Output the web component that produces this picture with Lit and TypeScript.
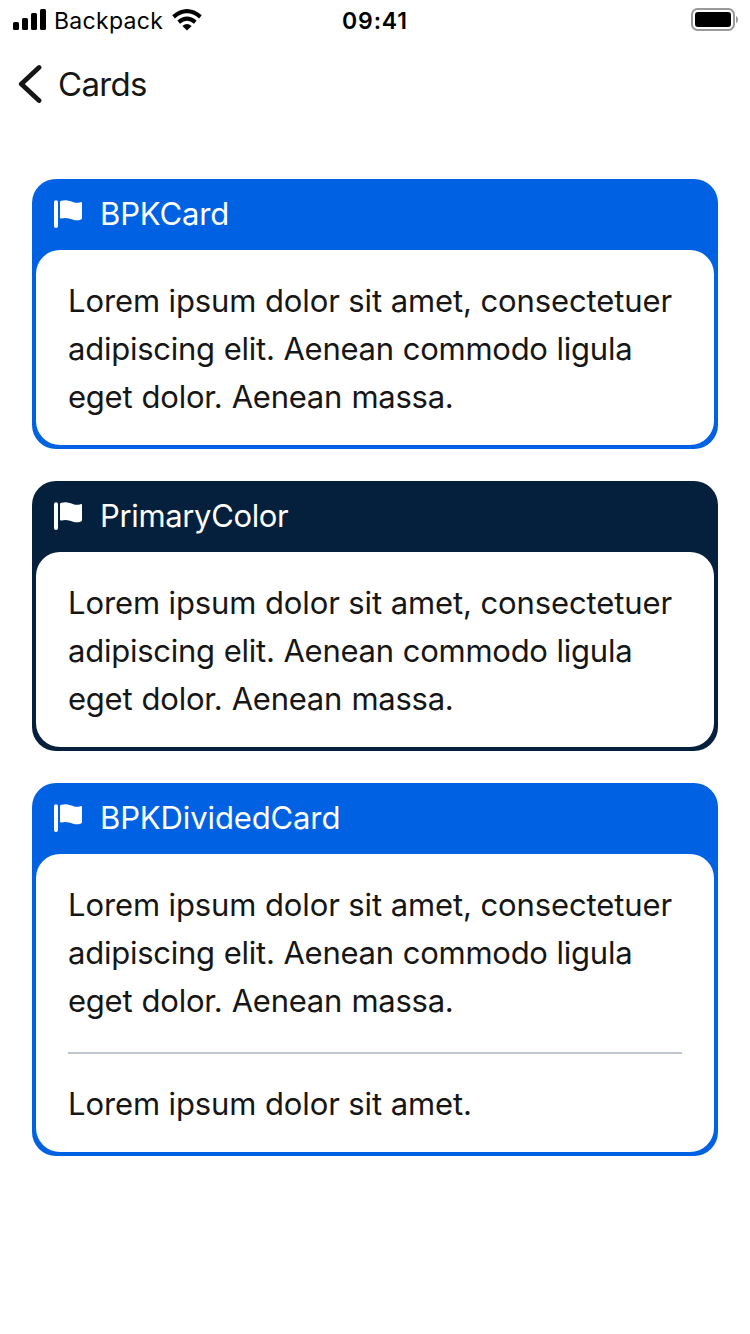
import { LitElement, html, css, svg } from "lit";
import { customElement, property } from "lit/decorators.js";

const flag = svg`
  <rect x="0" y="0.3" width="4" height="27.7" rx="2"/>
  <path d="M6 2.3C6 1.4 6.5 .9 7.3 .7C12.500 -.7 16 .9 19.500 2.200C21.800 3 24.400 2.900 26.400 2.200C27.400 1.900 28 2.300 28 3.200V18C28 18.700 27.700 19.200 27 19.500C22.500 21.300 19 19.900 16 18.700C13 17.600 10 17.700 7.500 18.500C6.600 18.800 6 18.400 6 17.600Z"/>`;

@customElement("status-bar")
class StatusBar extends LitElement {
  static styles = css`
    :host {
      display: grid;
      grid-template-columns: 1fr auto 1fr;
      align-items: center;
      height: 40px;
      padding: 0 12px 0 13px;
      box-sizing: border-box;
      color: #000;
      font-family: Inter, sans-serif;
    }
    .left { display: flex; align-items: center; }
    .carrier { font-size: 23px; letter-spacing: 0.3px; margin: 2px 9px 0 8px; line-height: 30px; }
    .time { font-size: 23px; font-weight: 600; letter-spacing: 0.85px; margin: 2px 0 0 -1px; line-height: 30px; }
    .battery { justify-self: end; display: block; }
    svg { display: block; }
  `;
  render() {
    return html`
      <div class="left">
        <svg width="33" height="22" viewBox="0 0 33 22">
          <rect x="0" y="13" width="6" height="8" rx="1.5"/>
          <rect x="9" y="9" width="6" height="12" rx="1.5"/>
          <rect x="18" y="4" width="6" height="17" rx="1.5"/>
          <rect x="27" y="0" width="6" height="21" rx="1.5"/>
        </svg>
        <span class="carrier">Backpack</span>
        <svg width="30" height="22" viewBox="0 0 30 22">
          <path d="M1.600 7.800Q15 -3.400 28.400 7.800" fill="none" stroke="#000" stroke-width="4.200"/>
          <path d="M6.700 13.100Q15 6.100 23.300 13.100" fill="none" stroke="#000" stroke-width="4"/>
          <path d="M10.400 17Q15 13.200 19.600 17L15 21.500Z"/>
        </svg>
      </div>
      <span class="time">09:41</span>
      <svg class="battery" width="47" height="24" viewBox="0 0 47 24">
        <rect x="1" y="1" width="42" height="21" rx="5.500" fill="none" stroke="#999" stroke-width="2"/>
        <rect x="4" y="4" width="36" height="15" rx="3" fill="#000"/>
        <path d="M45 8C47.600 9 47.600 14 45 15Z" fill="#999"/>
      </svg>
    `;
  }
}

@customElement("nav-bar")
class NavBar extends LitElement {
  static styles = css`
    :host {
      display: flex;
      align-items: center;
      height: 88px;
      padding-left: 18px;
      box-sizing: border-box;
      color: #161616;
      font-family: Inter, sans-serif;
    }
    .title { font-size: 33px; line-height: 44px; margin: 0 0 1px 16px; letter-spacing: -0.7px; }
  `;
  render() {
    return html`
      <svg width="24" height="40" viewBox="0 0 24 40">
        <path d="M21 3.500L3.300 20L21 36.500" fill="none" stroke="#161616" stroke-width="4.800" stroke-linecap="round" stroke-linejoin="round"/>
      </svg>
      <span class="title">Cards</span>
    `;
  }
}

@customElement("bpk-card")
class BpkCard extends LitElement {
  @property() heading = "";
  @property({ reflect: true }) tone = "accent";
  @property({ attribute: false }) sections: string[][] = [];

  static styles = css`
    :host {
      display: block;
      padding: 0 4px 4px;
      border-radius: 24px;
      background: #0062e3;
      font-family: Inter, sans-serif;
      font-size: 31px;
    }
    :host([tone="primary"]) { background: #05203c; }
    .header {
      display: flex;
      align-items: center;
      gap: 18px;
      height: 71px;
      padding-left: 18px;
      color: #fff;
    }
    .icon { fill: #fff; margin-top: -1px; }
    .heading { line-height: 40px; letter-spacing: -0.12px; margin-bottom: 2px; }
    :host([tone="primary"]) .heading { letter-spacing: -0.35px; }
    .body {
      border-radius: 24px;
      background: #fff;
      color: #161616;
      padding: 0 32px;
    }
    .section { padding: 27px 0 24px; line-height: 48px; letter-spacing: -0.11px; white-space: nowrap; }
    .section + .section { border-top: 2px solid #c1c7cf; padding: 26px 0 24px; }
    .split { padding-bottom: 27px; }
    .line { display: block; }
    .line:nth-child(2) { letter-spacing: -0.25px; word-spacing: 0.4px; }
    .line:nth-child(3) { letter-spacing: -0.26px; word-spacing: 0.9px; }
  `;
  render() {
    const divided = this.sections.length > 1;
    return html`
      <div class="header">
        <svg class="icon" width="28" height="28" viewBox="0 0 28 28">${flag}</svg>
        <span class="heading">${this.heading}</span>
      </div>
      <div class="body">
        ${this.sections.map(
          (lines, i) => html`<div class="section ${divided && i === 0 ? "split" : ""}">
            ${lines.map((line) => html`<span class="line">${line}</span>`)}
          </div>`
        )}
      </div>
    `;
  }
}

const lorem = [
  "Lorem ipsum dolor sit amet, consectetuer",
  "adipiscing elit. Aenean commodo ligula",
  "eget dolor. Aenean massa.",
];

@customElement("app-root")
class AppRoot extends LitElement {
  static styles = css`
    :host { display: block; min-height: 1334px; background: #fff; }
    .cards { display: flex; flex-direction: column; gap: 32px; padding: 51px 32px 0; }
  `;
  render() {
    return html`
      <status-bar></status-bar>
      <nav-bar></nav-bar>
      <main class="cards">
        <bpk-card heading="BPKCard" .sections=${[lorem]}></bpk-card>
        <bpk-card heading="PrimaryColor" tone="primary" .sections=${[lorem]}></bpk-card>
        <bpk-card heading="BPKDividedCard" .sections=${[lorem, ["Lorem ipsum dolor sit amet."]]}></bpk-card>
      </main>
    `;
  }
}
